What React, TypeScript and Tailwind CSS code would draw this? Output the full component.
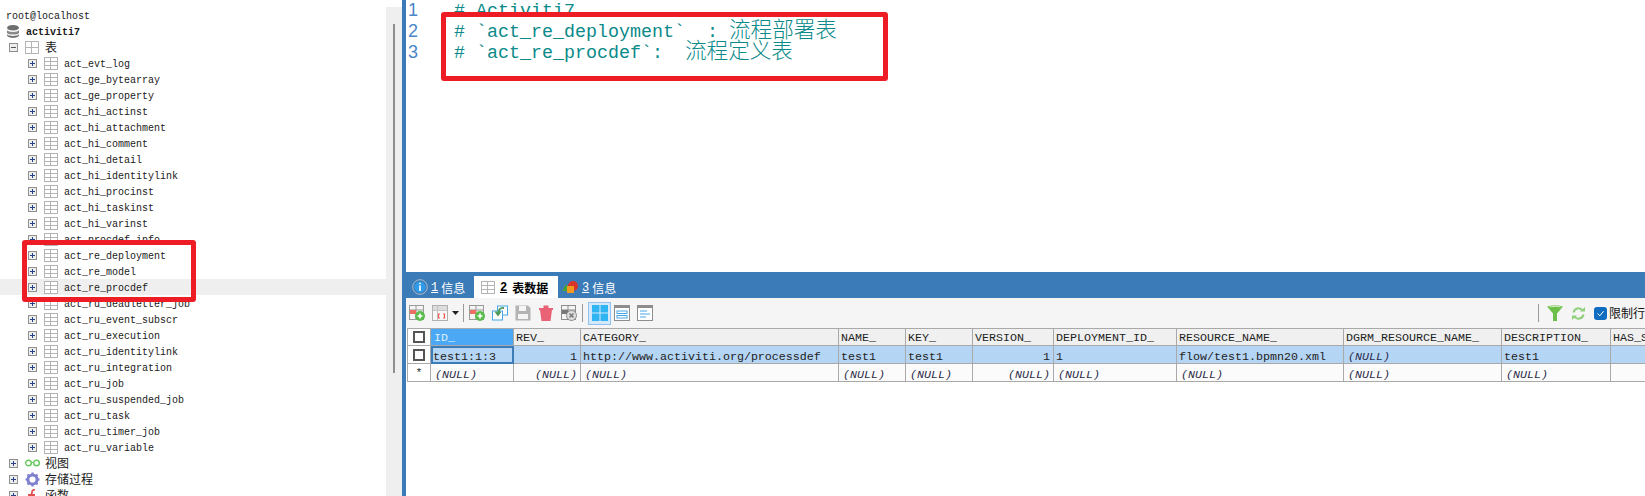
import React from "react";

const tables = [
  "act_evt_log","act_ge_bytearray","act_ge_property","act_hi_actinst","act_hi_attachment","act_hi_comment","act_hi_detail","act_hi_identitylink","act_hi_procinst","act_hi_taskinst","act_hi_varinst","act_procdef_info","act_re_deployment","act_re_model","act_re_procdef","act_ru_deadletter_job","act_ru_event_subscr","act_ru_execution","act_ru_identitylink","act_ru_integration","act_ru_job","act_ru_suspended_job","act_ru_task","act_ru_timer_job","act_ru_variable",
];

function Expander({ open = false }: { open?: boolean }) {
  return (
    <svg width="9" height="9" viewBox="0 0 9 9" className="shrink-0 mr-[7px]">
      <rect x="0.5" y="0.5" width="8" height="8" fill="#eeeeee" stroke="#8f8f8f" />
      <path d="M2 4.5H7" stroke={open ? "#555555" : "#27408f"} />
      {!open && <path d="M4.5 2V7" stroke="#27408f" />}
    </svg>
  );
}

function GridIcon({ rows = 3, className = "" }: { rows?: number; className?: string }) {
  return (
    <svg width="14" height="13" viewBox="0 0 14 13" className={"shrink-0 " + className}>
      <rect x="0.5" y="0.5" width="13" height="12" fill="#ffffff" stroke="#b4b4b4" />
      <path d="M6.5 0.5V12.5" stroke="#b4b4b4" />
      {rows === 3 ? <path d="M0.5 4.5H13.5M0.5 8.5H13.5" stroke="#b4b4b4" /> : <path d="M0.5 6.5H13.5" stroke="#b4b4b4" />}
    </svg>
  );
}

function Row({ pl, children, hl = false }: { pl: string; children: React.ReactNode; hl?: boolean }) {
  return <div className={"flex items-center h-4 " + pl + (hl ? " bg-[#efefef]" : "")}>{children}</div>;
}

function AddTableIcon({ cls = "" }: { cls?: string }) {
  return (
    <svg width="16" height="16" viewBox="0 0 16 16" className={"shrink-0 " + cls}>
      <rect x="0.5" y="0.5" width="14" height="14" fill="#f4f4f4" stroke="#9a9a9a" />
      <path d="M7 0.5V14.5M0.5 5H14.5" stroke="#9a9a9a" />
      <rect x="1" y="5" width="6" height="4" fill="#ee6e62" />
      <circle cx="11" cy="11" r="5" fill="#58bd4c" />
      <path d="M8.5 11H13.5M11 8.5V13.5" stroke="#ffffff" strokeWidth="1.6" />
    </svg>
  );
}

const mono = "font-['Liberation_Mono','Noto_Sans_CJK_SC',monospace]";
const cjk = "font-['Noto_Sans_CJK_SC','Noto_Sans',sans-serif]";

function Cell({ children, right = false, nul = false, cls = "" }: { children?: React.ReactNode; right?: boolean; nul?: boolean; cls?: string }) {
  return (
    <td className={"border-r border-b border-[#a9a9a9] p-0 pt-[5px] leading-[12px] overflow-hidden whitespace-nowrap " + (right ? "text-right pr-[3px] " : nul ? "pl-[4px] " : "pl-[2px] ") + (nul ? "italic text-[#2b2b4a] " : "text-[#222222] ") + cls}>
      {children}
    </td>
  );
}

function Check() {
  return <div className="w-[12px] h-[12px] border-2 border-[#555555] bg-white mx-auto" />;
}

export default function App() {
  const headers = ["REV_", "CATEGORY_", "NAME_", "KEY_", "VERSION_", "DEPLOYMENT_ID_", "RESOURCE_NAME_", "DGRM_RESOURCE_NAME_", "DESCRIPTION_", "HAS_START_FORM_KEY_"];
  return (
    <div className={"relative flex w-[1645px] h-[496px] overflow-hidden bg-white " + mono}>
      <aside className="w-[386px] shrink-0 pt-[7px] text-[10px] leading-4 text-[#1a1a1a]">
        <Row pl="pl-[6px]"><span className="pt-[4px]">root@localhost</span></Row>
        <Row pl="pl-[7px]">
          <svg width="12" height="13" viewBox="0 0 12 13" className="shrink-0 mr-[7px]">
            <ellipse cx="6" cy="2.8" rx="6" ry="2.8" fill="#6e6e6e" />
            <path d="M0 5C1 7.6 11 7.6 12 5V8C11 10 1 10 0 8Z" fill="#8a8a8a" />
            <path d="M0 9.3C1 11.6 11 11.6 12 9.3V10.5C11 13.6 1 13.6 0 10.5Z" fill="#6e6e6e" />
          </svg>
          <span className="font-bold pt-[4px]">activiti7</span>
        </Row>
        <Row pl="pl-[9px]">
          <Expander open />
          <GridIcon rows={2} className="mr-[6px]" />
          <span className={"text-[12px] " + cjk}>表</span>
        </Row>
        {tables.map((t) => (
          <Row key={t} pl="pl-[28px]" hl={t === "act_re_procdef"}>
            <Expander />
            <GridIcon className="mr-[6px]" />
            <span className="pt-[4px]">{t}</span>
          </Row>
        ))}
        <Row pl="pl-[9px]">
          <Expander />
          <svg width="15" height="8" viewBox="0 0 15 8" className="shrink-0 mr-[5px]">
            <circle cx="3.5" cy="4" r="2.8" fill="none" stroke="#63c95a" strokeWidth="1.4" />
            <circle cx="11.5" cy="4" r="2.8" fill="none" stroke="#63c95a" strokeWidth="1.4" />
            <path d="M6 3.5H9" stroke="#63c95a" />
          </svg>
          <span className={"text-[12px] " + cjk}>视图</span>
        </Row>
        <Row pl="pl-[9px]">
          <Expander />
          <svg width="15" height="15" viewBox="0 0 15 15" className="shrink-0 mr-[5px]">
            <circle cx="7.5" cy="7.5" r="4.6" fill="none" stroke="#7f80cf" strokeWidth="3" />
            <path d="M7.5 0.5V3M7.5 12V14.5M0.5 7.5H3M12 7.5H14.5M2.5 2.5L4.2 4.2M10.8 10.8L12.5 12.5M12.5 2.5L10.8 4.2M4.2 10.8L2.5 12.5" stroke="#7f80cf" strokeWidth="2.2" />
          </svg>
          <span className={"text-[12px] " + cjk}>存储过程</span>
        </Row>
        <Row pl="pl-[9px]">
          <Expander />
          <svg width="15" height="15" viewBox="0 0 15 15" className="shrink-0 mr-[5px]">
            <path d="M10 2C7 1 7 4 6.5 7C6 10 6 13 3 13M3 7H10" fill="none" stroke="#e2504e" strokeWidth="1.8" />
          </svg>
          <span className={"text-[12px] " + cjk}>函数</span>
        </Row>
      </aside>

      <div className="w-[16px] shrink-0 mt-[7px] bg-[#efefef] pt-[17px] flex justify-center">
        <div className="w-[2px] h-[349px] bg-[#8f8f8f]" />
      </div>
      <div className="w-[4px] shrink-0 bg-[#3b7bb8]" />

      <main className="flex-1 min-w-0 flex flex-col">
        <section className="h-[272px] flex overflow-hidden">
          <div className="w-[48px] pl-[2px] font-['Liberation_Sans',sans-serif] text-[18px] leading-[21px] text-[#4a86c8]">
            <div>1</div>
            <div>2</div>
            <div>3</div>
          </div>
          <div className="pt-px text-[18.33px] leading-[21px] text-[#0b8a8a] whitespace-pre font-['Liberation_Mono',monospace]">
            <div className="h-[21px]"># Activiti7</div>
            <div className="h-[21px]"># `act_re_deployment`  : <span className={"text-[21.6px] leading-[0] font-light " + cjk}>流程部署表</span></div>
            <div className="h-[21px]"># `act_re_procdef`:  <span className={"text-[21.6px] leading-[0] font-light " + cjk}>流程定义表</span></div>
          </div>
        </section>

        <div className="h-[26px] bg-[#3b7bb8] flex items-end text-white text-[12px] leading-[22px]">
          <div className="flex items-center h-[22px] pl-[6px] w-[68px]">
            <svg width="16" height="16" viewBox="0 0 16 16" className="shrink-0 mr-[3px]">
              <circle cx="8" cy="8" r="7.3" fill="#3b7bb8" stroke="#a9bccd" />
              <circle cx="8" cy="8" r="5.6" fill="#2f9be8" />
              <path d="M8 3.8V5.3M8 6.6V12" stroke="#ffffff" strokeWidth="1.6" />
            </svg>
            <span className={mono + " pt-[2px] underline mr-[3px]"}>1</span>
            <span className={cjk + " pt-[2px]"}>信息</span>
          </div>
          <div className="flex items-center h-[22px] w-[84px] bg-white text-black pl-[7px]">
            <GridIcon rows={3} className="mr-[5px]" />
            <span className={mono + " pt-[2px] underline font-bold mr-[5px]"}>2</span>
            <span className={cjk + " pt-[2px] font-bold"}>表数据</span>
          </div>
          <div className="flex items-center h-[22px] pl-[4px]">
            <svg width="16" height="14" viewBox="0 0 16 14" className="shrink-0 mr-[4px]">
              <path d="M0 11L4 4L8 11Z" fill="#47a33d" />
              <circle cx="11" cy="6" r="5" fill="#d9352c" />
              <rect x="5" y="6" width="7" height="7" fill="#f29a1f" />
            </svg>
            <span className={mono + " pt-[2px] underline mr-[3px]"}>3</span>
            <span className={cjk + " pt-[2px]"}>信息</span>
          </div>
        </div>

        <div className="h-[30px] bg-[#f5f5f5] flex items-center pl-[3px] overflow-hidden">
          <AddTableIcon />
          <svg width="16" height="16" viewBox="0 0 16 16" className="shrink-0 ml-[7px]">
            <rect x="0.5" y="0.5" width="15" height="15" fill="#f8f8f8" stroke="#b0b0b0" />
            <rect x="1" y="1" width="14" height="4" fill="#dddddd" />
            <path d="M5.5 0.5V15.5M0.5 5.5H15.5" stroke="#c4c4c4" />
            <path d="M8 9H6.5V13H8M11 9H12.5V13H11" fill="none" stroke="#ee5a50" strokeWidth="1.2" />
          </svg>
          <svg width="7" height="4" viewBox="0 0 7 4" className="shrink-0 ml-[4px]"><path d="M0 0H7L3.5 4Z" fill="#222222" /></svg>
          <div className="w-px h-[18px] bg-[#999999] ml-[4px]" />
          <AddTableIcon cls="ml-[5px]" />
          <svg width="16" height="16" viewBox="0 0 16 16" className="shrink-0 ml-[7px]">
            <rect x="5.5" y="1" width="10" height="9" fill="#ffffff" stroke="#46a8e8" />
            <rect x="0.5" y="6" width="10" height="9" fill="#ffffff" stroke="#46a8e8" />
            <path d="M12 3C8 2.5 6 5 6 9M3.5 6.5L6 10L8.5 6.5" fill="none" stroke="#4b9a5a" strokeWidth="1.8" />
          </svg>
          <svg width="16" height="16" viewBox="0 0 16 16" className="shrink-0 ml-[7px]">
            <path d="M0.5 0.5H13L15.5 3V15.5H0.5Z" fill="#b4b4b4" />
            <rect x="4" y="1" width="7" height="5" fill="#f5f5f5" />
            <rect x="3" y="9" width="10" height="5" fill="#f5f5f5" />
          </svg>
          <svg width="14" height="16" viewBox="0 0 14 16" className="shrink-0 ml-[8px]">
            <path d="M0 3H14V5H13L11.5 16H2.5L1 5H0Z" fill="#ea6276" />
            <rect x="4.5" y="0.5" width="5" height="3" fill="#ea6276" />
          </svg>
          <svg width="16" height="16" viewBox="0 0 16 16" className="shrink-0 ml-[8px]">
            <rect x="0.5" y="0.5" width="14" height="14" fill="#f4f4f4" stroke="#8d8d8d" />
            <path d="M7 0.5V14.5M0.5 5H14.5" stroke="#8d8d8d" />
            <rect x="1" y="5" width="6" height="4" fill="#777777" />
            <circle cx="10.5" cy="10.5" r="5" fill="#dddddd" stroke="#8d8d8d" />
            <path d="M8.5 8.5L12.5 12.5M12.5 8.5L8.5 12.5" stroke="#777777" strokeWidth="1.5" />
          </svg>
          <div className="w-px h-[18px] bg-[#999999] ml-[5px]" />
          <div className="w-[23px] h-[23px] ml-[5px] shrink-0 flex items-center justify-center bg-[#d4e8fa] border border-[#8fc4f2]">
            <svg width="16" height="16" viewBox="0 0 16 16">
              <rect x="0" y="0" width="7.5" height="7.5" fill="#2fb4f4" />
              <rect x="8.5" y="0" width="7.5" height="7.5" fill="#2fb4f4" />
              <rect x="0" y="8.5" width="7.5" height="7.5" fill="#2fb4f4" />
              <rect x="8.5" y="8.5" width="7.5" height="7.5" fill="#2fb4f4" />
            </svg>
          </div>
          <svg width="16" height="16" viewBox="0 0 16 16" className="shrink-0 ml-[3px]">
            <rect x="0.5" y="0.5" width="15" height="15" fill="#ffffff" stroke="#8d8d8d" />
            <rect x="0" y="0" width="16" height="3" fill="#8d8d8d" />
            <rect x="3" y="6" width="10" height="2.5" fill="#ffffff" stroke="#46a8e8" />
            <rect x="3" y="10.5" width="10" height="2.5" fill="#ffffff" stroke="#46a8e8" />
          </svg>
          <svg width="16" height="16" viewBox="0 0 16 16" className="shrink-0 ml-[7px]">
            <rect x="0.5" y="0.5" width="15" height="15" fill="#ffffff" stroke="#8d8d8d" />
            <rect x="0" y="0" width="16" height="3" fill="#8d8d8d" />
            <path d="M3 6H10M3 9H13M3 12H9" stroke="#46a8e8" />
          </svg>
          <div className="flex-1" />
          <div className="w-px h-[18px] bg-[#999999]" />
          <svg width="16" height="16" viewBox="0 0 16 16" className="shrink-0 ml-[8px]">
            <path d="M0 1.5C3 0 13 0 16 1.5L10 8.5V16H6V8.5Z" fill="#6cc04a" />
            <path d="M2.5 2C5 1.2 11 1.2 13.5 2" stroke="#cfeac0" fill="none" />
          </svg>
          <svg width="13" height="13" viewBox="0 0 13 13" className="shrink-0 ml-[9px]">
            <path d="M1.5 5.5A5 5 0 0 1 10.5 3.5M11.5 7.5A5 5 0 0 1 2.5 9.5" fill="none" stroke="#8fd07a" strokeWidth="2" />
            <path d="M8 4.5H13V0Z M5 8.5H0V13Z" fill="#8fd07a" />
          </svg>
          <div className="w-[13px] h-[13px] ml-[9px] shrink-0 rounded-[3px] bg-[#0f6cc0] flex items-center justify-center">
            <svg width="9" height="9" viewBox="0 0 9 9"><path d="M1.5 4.5L3.8 6.8L7.5 2.2" fill="none" stroke="#ffffff" /></svg>
          </div>
          <span className={"ml-[2px] text-[12px] text-[#111111] whitespace-nowrap " + cjk}>限制行</span>
        </div>

        <div className="pl-px">
          <table className="table-fixed border-separate border-spacing-0 w-[1264px] text-[11.67px] leading-[16px]">
            <colgroup>
              <col className="w-[24px]" />
              <col className="w-[83px]" />
              <col className="w-[67px]" />
              <col className="w-[258px]" />
              <col className="w-[67px]" />
              <col className="w-[67px]" />
              <col className="w-[81px]" />
              <col className="w-[123px]" />
              <col className="w-[167px]" />
              <col className="w-[158px]" />
              <col className="w-[109px]" />
              <col className="w-[60px]" />
            </colgroup>
            <thead>
              <tr className="h-[18px] bg-[#f0f0f0]">
                <th className="p-0 border border-[#a9a9a9] font-normal bg-white"><Check /></th>
                <th className="p-0 pt-[3px] pl-[3px] leading-[13px] border-t border-r border-b border-[#a9a9a9] font-normal text-left bg-[#4aa8f4] text-[#dff0ff]">ID_</th>
                {headers.map((h) => (
                  <th key={h} className="p-0 pt-[3px] pl-[2px] leading-[13px] border-t border-r border-b border-[#a9a9a9] font-normal text-left text-[#222222] overflow-hidden whitespace-nowrap">{h}</th>
                ))}
              </tr>
            </thead>
            <tbody>
              <tr className="h-[18px] bg-[#b5d5f5]">
                <td className="p-0 border-l border-r border-b border-[#a9a9a9] bg-white"><Check /></td>
                <td className="p-0 pt-[4px] leading-[10px] border-2 border-[#3b7bb8] text-[#222222] whitespace-nowrap">test1:1:3</td>
                <Cell right>1</Cell>
                <Cell>http://www.activiti.org/processdef</Cell>
                <Cell>test1</Cell>
                <Cell>test1</Cell>
                <Cell right>1</Cell>
                <Cell>1</Cell>
                <Cell>flow/test1.bpmn20.xml</Cell>
                <Cell nul>(NULL)</Cell>
                <Cell>test1</Cell>
                <Cell />
              </tr>
              <tr className="h-[18px] bg-[#fbfbfb]">
                <td className="p-0 border-l border-r border-b border-[#a9a9a9] bg-white text-center text-[#333333]">*</td>
                <Cell nul>(NULL)</Cell>
                <Cell nul right>(NULL)</Cell>
                <Cell nul>(NULL)</Cell>
                <Cell nul>(NULL)</Cell>
                <Cell nul>(NULL)</Cell>
                <Cell nul right>(NULL)</Cell>
                <Cell nul>(NULL)</Cell>
                <Cell nul>(NULL)</Cell>
                <Cell nul>(NULL)</Cell>
                <Cell nul>(NULL)</Cell>
                <Cell />
              </tr>
            </tbody>
          </table>
        </div>
      </main>

      <div className="absolute left-[22px] top-[240px] w-[174px] h-[62px] border-[5px] border-[#ee1c25] rounded-[3px]" />
      <div className="absolute left-[441px] top-[12px] w-[447px] h-[69px] border-[5px] border-[#ee1c25] rounded-[3px]" />
    </div>
  );
}
